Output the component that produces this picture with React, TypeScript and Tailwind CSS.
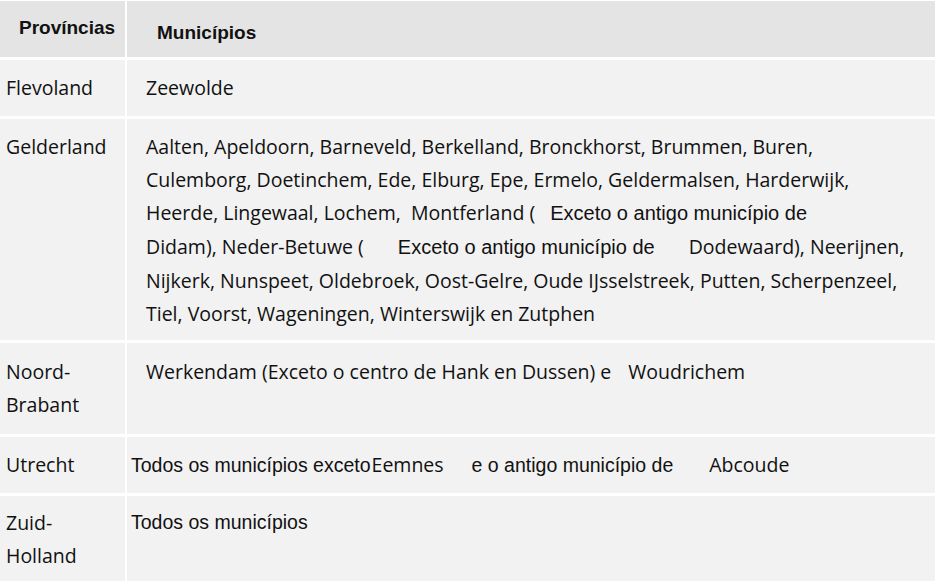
import React from "react";

const seg = "font-['Open_Sans',sans-serif] text-[19.5px]";
const ar = "font-['Liberation_Sans',Arial,sans-serif]";

export default function App() {
  return (
    <div className="w-[935px] h-[581px] bg-white pt-[1px] overflow-hidden text-[#111]">
      <div className="grid grid-cols-[125px_808px] grid-rows-[56px_56px_221px_91px_56px_90px] gap-x-[2px] gap-y-[3px]">
        {/* header */}
        <div className={`bg-[#e4e4e4] ${ar} font-bold text-[19px] pl-[19px] pt-[15px] leading-[24px]`}>Províncias</div>
        <div className={`bg-[#e4e4e4] ${ar} font-bold text-[19px] pl-[30px] pt-[20px] leading-[24px]`}>Municípios</div>

        {/* Flevoland */}
        <div className={`bg-[#f2f2f2] ${seg} pl-[6px] pt-[11px] leading-[33px]`}>Flevoland</div>
        <div className={`bg-[#f2f2f2] ${seg} pl-[19px] pt-[11px] leading-[33px]`}>Zeewolde</div>

        {/* Gelderland */}
        <div className={`bg-[#f2f2f2] ${seg} pl-[6px] pt-[11px] leading-[33px]`}>Gelderland</div>
        <div className={`bg-[#f2f2f2] ${seg} pl-[19px] pt-[11px] leading-[33px] whitespace-nowrap`}>
          <div>Aalten, Apeldoorn, Barneveld, Berkelland, Bronckhorst, Brummen, Buren,</div>
          <div>Culemborg, Doetinchem, Ede, Elburg, Epe, Ermelo, Geldermalsen, Harderwijk,</div>
          <div>
            Heerde, Lingewaal, Lochem,&nbsp; Montferland (
            <span className={`${ar} text-[20px] ml-[15px]`}>Exceto o antigo município de</span>
          </div>
          <div>
            Didam), Neder-Betuwe (
            <span className={`${ar} text-[20px] ml-[34px]`}>Exceto o antigo município de</span>
            <span className="ml-[34px]">Dodewaard), Neerijnen,</span>
          </div>
          <div>Nijkerk, Nunspeet, Oldebroek, Oost-Gelre, Oude IJsselstreek, Putten, Scherpenzeel,</div>
          <div>Tiel, Voorst, Wageningen, Winterswijk en Zutphen</div>
        </div>

        {/* Noord-Brabant */}
        <div className={`bg-[#f2f2f2] ${seg} pl-[6px] pt-[12px] leading-[33px]`}>
          <div>Noord-</div>
          <div>Brabant</div>
        </div>
        <div className={`bg-[#f2f2f2] ${seg} pl-[19px] pt-[12px] leading-[33px] whitespace-nowrap`}>
          Werkendam (Exceto o centro de Hank en Dussen) e<span className="ml-[17px]">Woudrichem</span>
        </div>

        {/* Utrecht */}
        <div className={`bg-[#f2f2f2] ${seg} pl-[6px] pt-[11px] leading-[33px]`}>Utrecht</div>
        <div className={`bg-[#f2f2f2] pl-[4px] pt-[11px] leading-[33px] whitespace-nowrap`}>
          <span className={`${ar} text-[19.5px]`}>Todos os municípios exceto</span>
          <span className={`${seg} ml-[1px]`}>Eemnes</span>
          <span className={`${ar} text-[19.5px] ml-[28px]`}>e o antigo município de</span>
          <span className={`${seg} ml-[36px]`}>Abcoude</span>
        </div>

        {/* Zuid-Holland */}
        <div className={`bg-[#f2f2f2] ${seg} pl-[6px] pt-[10px] leading-[33px]`}>
          <div>Zuid-</div>
          <div>Holland</div>
        </div>
        <div className={`bg-[#f2f2f2] pl-[4px] pt-[10px] leading-[33px]`}>
          <span className={`${ar} text-[19.5px]`}>Todos os municípios</span>
        </div>
      </div>
    </div>
  );
}
